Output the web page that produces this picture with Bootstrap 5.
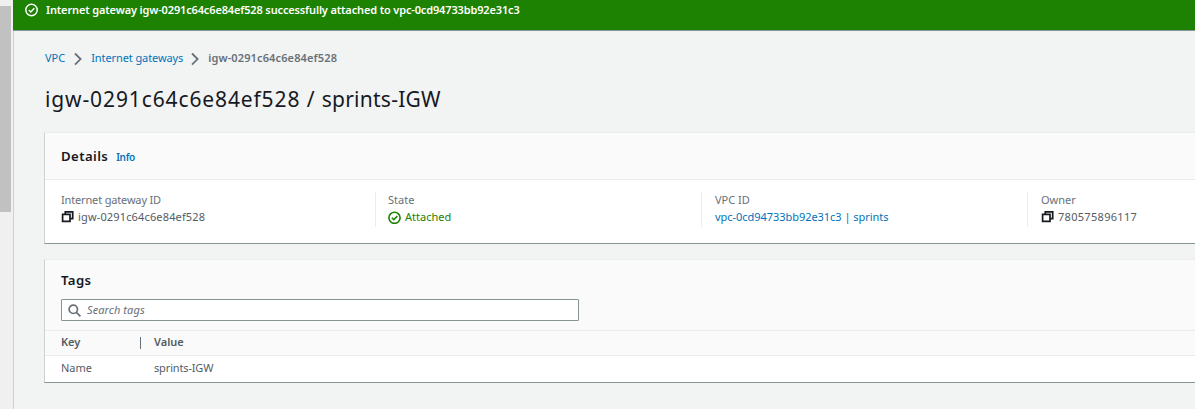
<!DOCTYPE html>
<html lang="en">
<head>
<meta charset="utf-8">
<title>Internet gateway details</title>
<link href="https://cdn.jsdelivr.net/npm/bootstrap@5.3.0/dist/css/bootstrap.min.css" rel="stylesheet">
<style>
body{font-family:"Noto Sans","Open Sans",sans-serif;font-size:11px;line-height:17px;color:#545b64;background:#f2f3f3;height:409px;overflow:hidden}
a{color:#0073bb;text-decoration:none}
svg{display:block;flex:none}
.scroll-rail{width:13px;background:#f0f0f0;padding-top:6px}
.scroll-thumb{width:11px;height:206px;background:#c1c1c1}
.page-main{border-left:1px solid #ccd2d2;min-width:0}
.flash{height:31px;margin-left:-1px;padding:1px 0 0 12px;background:#1d8102;border-bottom:1px solid #879596;color:#fff;font-weight:600;letter-spacing:-.145px}
.flash svg{margin-top:1px}
.page-body{padding:18px 0 0 31px}
.crumbs{height:17px}
.crumbs .chev{margin:3px 9px 0 9px}
.crumbs .t-igs{letter-spacing:-.1px}
.crumbs .chev-last{margin-left:8px}
.crumbs .here{font-weight:600;color:#687078;letter-spacing:.13px}
.page-title{font-size:21px;line-height:28px;font-weight:400;color:#16191f;letter-spacing:.88px;margin:19px 0 19px}
.page-title span{letter-spacing:.26px}
.panel{border:0;border-left:1px solid #ccd2d2;border-top:1px solid #eaeded;border-bottom:1px solid #879596;border-radius:0;background:#fff;color:inherit;margin-left:-1px}
.panel + .panel{margin-top:15px}
.panel-head{background:#fafafa;border-bottom:1px solid #eaeded;padding-left:16px}
.head-details{height:47px}
.head-tags{height:71px;padding-top:11px}
.panel-title{font-size:13.2px;line-height:18px;font-weight:600;color:#16191f;letter-spacing:.4px;margin:0}
.info{font-weight:600;font-size:10px;letter-spacing:-.3px;margin-left:8px;padding-top:2px}
.facts{padding:11px 0 16px 16px;overflow:hidden}
.fact{height:35px;width:326px;flex:none;padding-left:13px;margin-top:1px;border-left:1px solid #eaeded}
.fact > *{margin-top:-1px;margin-bottom:1px}
.fact:nth-child(2){padding-left:12px}
.fact:first-child{width:314px;padding:0;border:0}
.fact:last-child{flex:1;min-width:0}
.fact-name{color:#687078}
.fact:first-child .fact-name{letter-spacing:-.16px}
.t-id{letter-spacing:.15px}
.t-owner{letter-spacing:.3px}
.t-vpcid{letter-spacing:-.04px}
.state{color:#1d8102}
.search{width:518px;height:22px;background:#fff;border:1px solid #879596;border-radius:1px;padding-left:6px;margin-top:10px}
.search input{border:0;background:none;outline:0;padding:0 0 1px 6px;font-size:11px;font-style:italic;width:300px;letter-spacing:.1px}
.search input::placeholder{color:#687078;opacity:1}
.key-col{width:109px;padding-left:16px}
.tag-head{height:25px;background:#fafafa;border-bottom:1px solid #eaeded;font-weight:600;padding-bottom:3px}
.tag-head .key-col::after{content:"";width:1px;height:12px;background:#687078;margin:2px 13px 0 0}
.tag-row{height:26px;padding-bottom:3px}
.t-val{letter-spacing:-.15px}
</style>
</head>
<body>
<div class="d-flex h-100">
  <div class="scroll-rail flex-shrink-0"><div class="scroll-thumb"></div></div>
  <main class="page-main flex-grow-1">
    <div class="flash d-flex">
      <svg class="me-2" width="13" height="16" viewBox="0 0 13 16" fill="none" stroke="#fff" stroke-width="1.5"><circle cx="6.5" cy="8" r="5.7"/><path d="M3.8 8l2 2 3.5-3.8"/></svg>
      <span>Internet gateway igw-0291c64c6e84ef528 successfully attached to vpc-0cd94733bb92e31c3</span>
    </div>
    <div class="page-body">
      <nav class="crumbs d-flex">
        <a href="#">VPC</a>
        <svg class="chev" width="8" height="14" viewBox="0 0 8 14" fill="none" stroke="#687078" stroke-width="1.8"><path d="M1 1.5l5.6 5.6L1 12.7"/></svg>
        <a href="#" class="t-igs">Internet gateways</a>
        <svg class="chev chev-last" width="8" height="14" viewBox="0 0 8 14" fill="none" stroke="#687078" stroke-width="1.8"><path d="M1 1.5l5.6 5.6L1 12.7"/></svg>
        <span class="here">igw-0291c64c6e84ef528</span>
      </nav>
      <h1 class="page-title">igw-0291c64c6e84ef528 / <span>sprints-IGW</span></h1>
      <section class="panel card">
        <div class="panel-head head-details d-flex align-items-center">
          <h2 class="panel-title">Details</h2><a href="#" class="info">Info</a>
        </div>
        <div class="facts d-flex">
          <div class="fact">
            <div class="fact-name">Internet gateway ID</div>
            <div class="d-flex align-items-center"><svg class="me-1" width="13" height="15" viewBox="0 0 13 15" fill="#fff" stroke="#16191f" stroke-width="1.7"><path d="M4.3 2.9h7.4v6.8H4.3z"/><path d="M1.6 5.4h7.4v7H1.6z"/></svg><span class="t-id">igw-0291c64c6e84ef528</span></div>
          </div>
          <div class="fact">
            <div class="fact-name">State</div>
            <div class="state d-flex align-items-center"><svg class="me-1" width="13" height="15" viewBox="0 0 13 15" fill="none" stroke="#1d8102" stroke-width="1.6"><circle cx="6.5" cy="8.8" r="5.6"/><path d="M3.8 8.7l2 2 3.5-3.6"/></svg><span>Attached</span></div>
          </div>
          <div class="fact">
            <div class="fact-name">VPC ID</div>
            <a href="#" class="d-block t-vpcid">vpc-0cd94733bb92e31c3 | sprints</a>
          </div>
          <div class="fact">
            <div class="fact-name">Owner</div>
            <div class="d-flex align-items-center"><svg class="me-1" width="13" height="15" viewBox="0 0 13 15" fill="#fff" stroke="#16191f" stroke-width="1.7"><path d="M4.3 2.9h7.4v6.8H4.3z"/><path d="M1.6 5.4h7.4v7H1.6z"/></svg><span class="t-owner">780575896117</span></div>
          </div>
        </div>
      </section>
      <section class="panel card">
        <div class="panel-head head-tags">
          <h2 class="panel-title">Tags</h2>
          <div class="search d-flex align-items-center">
            <svg width="13" height="13" viewBox="0 0 13 13" fill="none" stroke="#687078" stroke-width="1.7"><circle cx="5.3" cy="5.3" r="4.2"/><path d="M8.4 8.4l4 4"/></svg>
            <input type="text" placeholder="Search tags">
          </div>
        </div>
        <div class="tag-head d-flex align-items-center"><div class="key-col d-flex align-items-center justify-content-between">Key</div><div>Value</div></div>
        <div class="tag-row d-flex align-items-center"><div class="key-col">Name</div><div class="t-val">sprints-IGW</div></div>
      </section>
    </div>
  </main>
</div>
<script src="https://cdn.jsdelivr.net/npm/bootstrap@5.3.0/dist/js/bootstrap.bundle.min.js"></script>
</body>
</html>
